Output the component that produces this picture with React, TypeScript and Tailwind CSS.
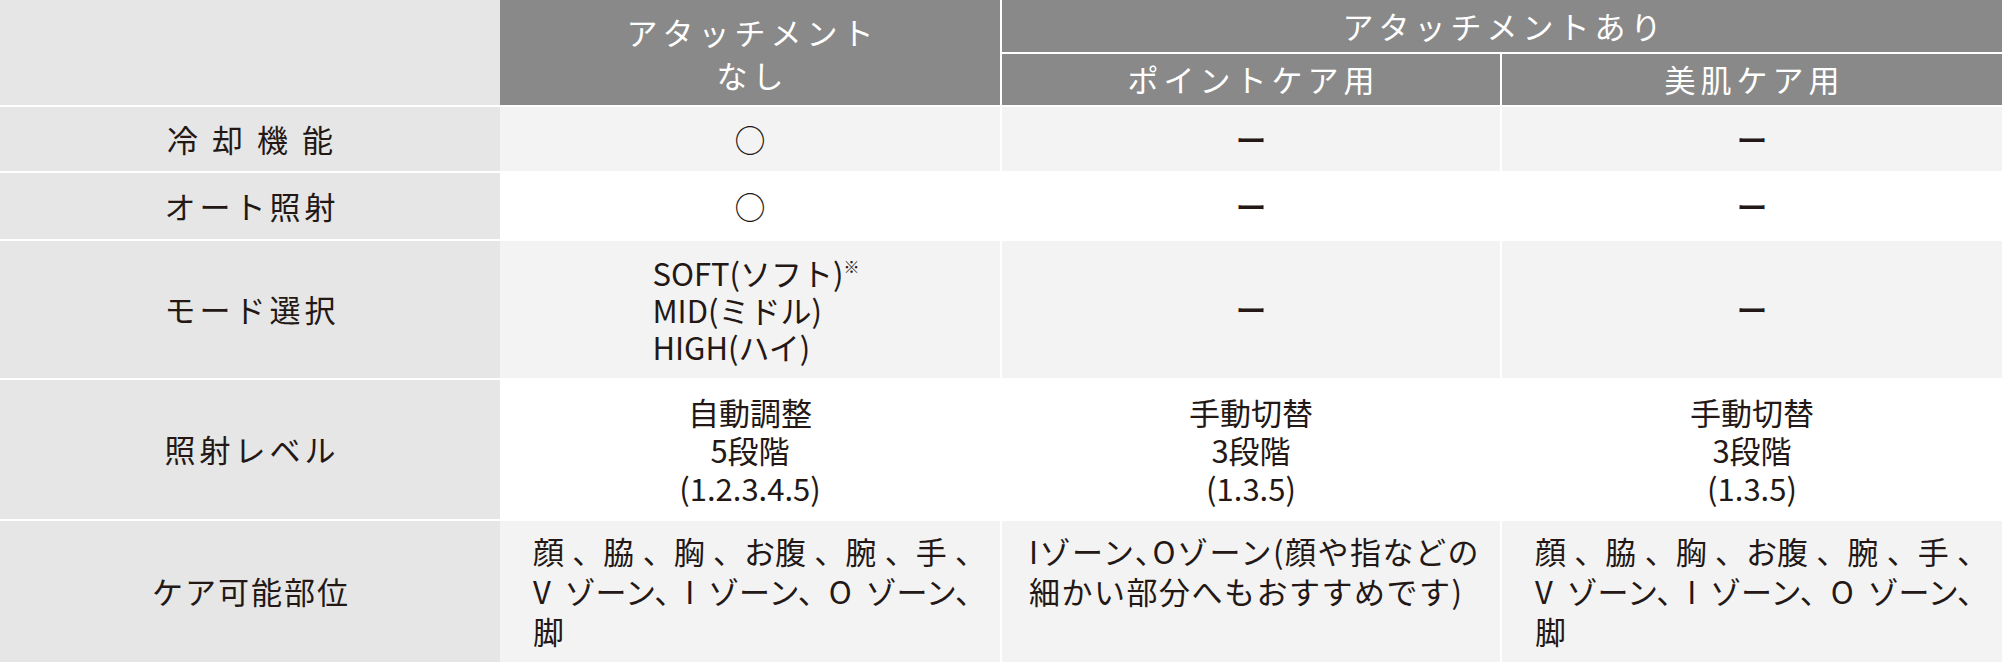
import React from "react";

// 比較表: アタッチメントの有無ごとの機能
const cell = "flex items-center justify-center";
const label = `${cell} bg-[#e6e6e6] text-[31px]`;
const head = `${cell} bg-[#898989] text-white text-[31px] tracking-[5px] pl-[5px]`;

const Dash = () => <span className="font-medium">ー</span>;

const BodyParts = () => (
  <div className="w-full flex flex-col leading-[40px]">
    <div className="flex justify-between">
      <span>顔</span>
      <span>、脇</span>
      <span>、胸</span>
      <span>、お腹</span>
      <span>、腕</span>
      <span>、手</span>
      <span>、</span>
    </div>
    <div className="flex justify-between">
      <span>V</span>
      <span>ゾーン、I</span>
      <span>ゾーン、O</span>
      <span>ゾーン、</span>
    </div>
    <div>脚</div>
  </div>
);

const App = () => {
  return (
    <div className="w-[2002px] h-[662px] bg-white text-[#231815] font-['Noto_Sans_CJK_JP','Noto_Sans',sans-serif] text-[31px]">
      <div className="grid grid-cols-[500px_500px_500px_502px] grid-rows-[52px_51px_64px_66px_137px_139px_141px] gap-y-[2px]">
        {/* header */}
        <div className="row-span-2 bg-[#e6e6e6]" />
        <div className={`${head} row-span-2 flex-col leading-[43px]`}>
          <span>アタッチメント</span>
          <span>なし</span>
        </div>
        <div className={`${head} col-span-2 border-l-2 border-white`}>アタッチメントあり</div>
        <div className={`${head} border-l-2 border-white`}>ポイントケア用</div>
        <div className={`${head} border-l-2 border-white`}>美肌ケア用</div>

        {/* 冷却機能 */}
        <div className={`${label} tracking-[14px] pl-[14px]`}>冷却機能</div>
        <div className={`${cell} bg-[#f3f3f3]`}>○</div>
        <div className={`${cell} bg-[#f3f3f3] border-l-2 border-white`}><Dash /></div>
        <div className={`${cell} bg-[#f3f3f3] border-l-2 border-white`}><Dash /></div>

        {/* オート照射 */}
        <div className={`${label} tracking-[4px] pl-[4px]`}>オート照射</div>
        <div className={`${cell} bg-white`}>○</div>
        <div className={`${cell} bg-white border-l-2 border-white`}><Dash /></div>
        <div className={`${cell} bg-white border-l-2 border-white`}><Dash /></div>

        {/* モード選択 */}
        <div className={`${label} tracking-[4px] pl-[4px]`}>モード選択</div>
        <div className={`${cell} bg-[#f3f3f3]`}>
          <div className="text-left leading-[37px] pl-[12px]">
            <div>
              SOFT(ソフト)
              <span className="inline-block align-top text-[16px] leading-none mt-[4px]">※</span>
            </div>
            <div>MID(ミドル)</div>
            <div>HIGH(ハイ)</div>
          </div>
        </div>
        <div className={`${cell} bg-[#f3f3f3] border-l-2 border-white`}><Dash /></div>
        <div className={`${cell} bg-[#f3f3f3] border-l-2 border-white`}><Dash /></div>

        {/* 照射レベル */}
        <div className={`${label} tracking-[4px] pl-[4px]`}>照射レベル</div>
        <div className={`${cell} bg-white flex-col leading-[38px]`}>
          <span>自動調整</span>
          <span>5段階</span>
          <span>(1.2.3.4.5)</span>
        </div>
        <div className={`${cell} bg-white flex-col leading-[38px] border-l-2 border-white`}>
          <span>手動切替</span>
          <span>3段階</span>
          <span>(1.3.5)</span>
        </div>
        <div className={`${cell} bg-white flex-col leading-[38px] border-l-2 border-white`}>
          <span>手動切替</span>
          <span>3段階</span>
          <span>(1.3.5)</span>
        </div>

        {/* ケア可能部位 */}
        <div className={`${label} tracking-[2px] pl-[2px]`}>ケア可能部位</div>
        <div className="bg-[#f3f3f3] pl-[33px] pr-[14px] pt-[10px]">
          <BodyParts />
        </div>
        <div className="bg-[#f3f3f3] border-l-2 border-white pl-[27px] pt-[10px] leading-[40px] tracking-[1.5px] whitespace-nowrap">
          <div>Iゾーン､Oゾーン(顔や指などの</div>
          <div>細かい部分へもおすすめです)</div>
        </div>
        <div className="bg-[#f3f3f3] border-l-2 border-white pl-[33px] pr-[14px] pt-[10px]">
          <BodyParts />
        </div>
      </div>
    </div>
  );
};

export default App;
